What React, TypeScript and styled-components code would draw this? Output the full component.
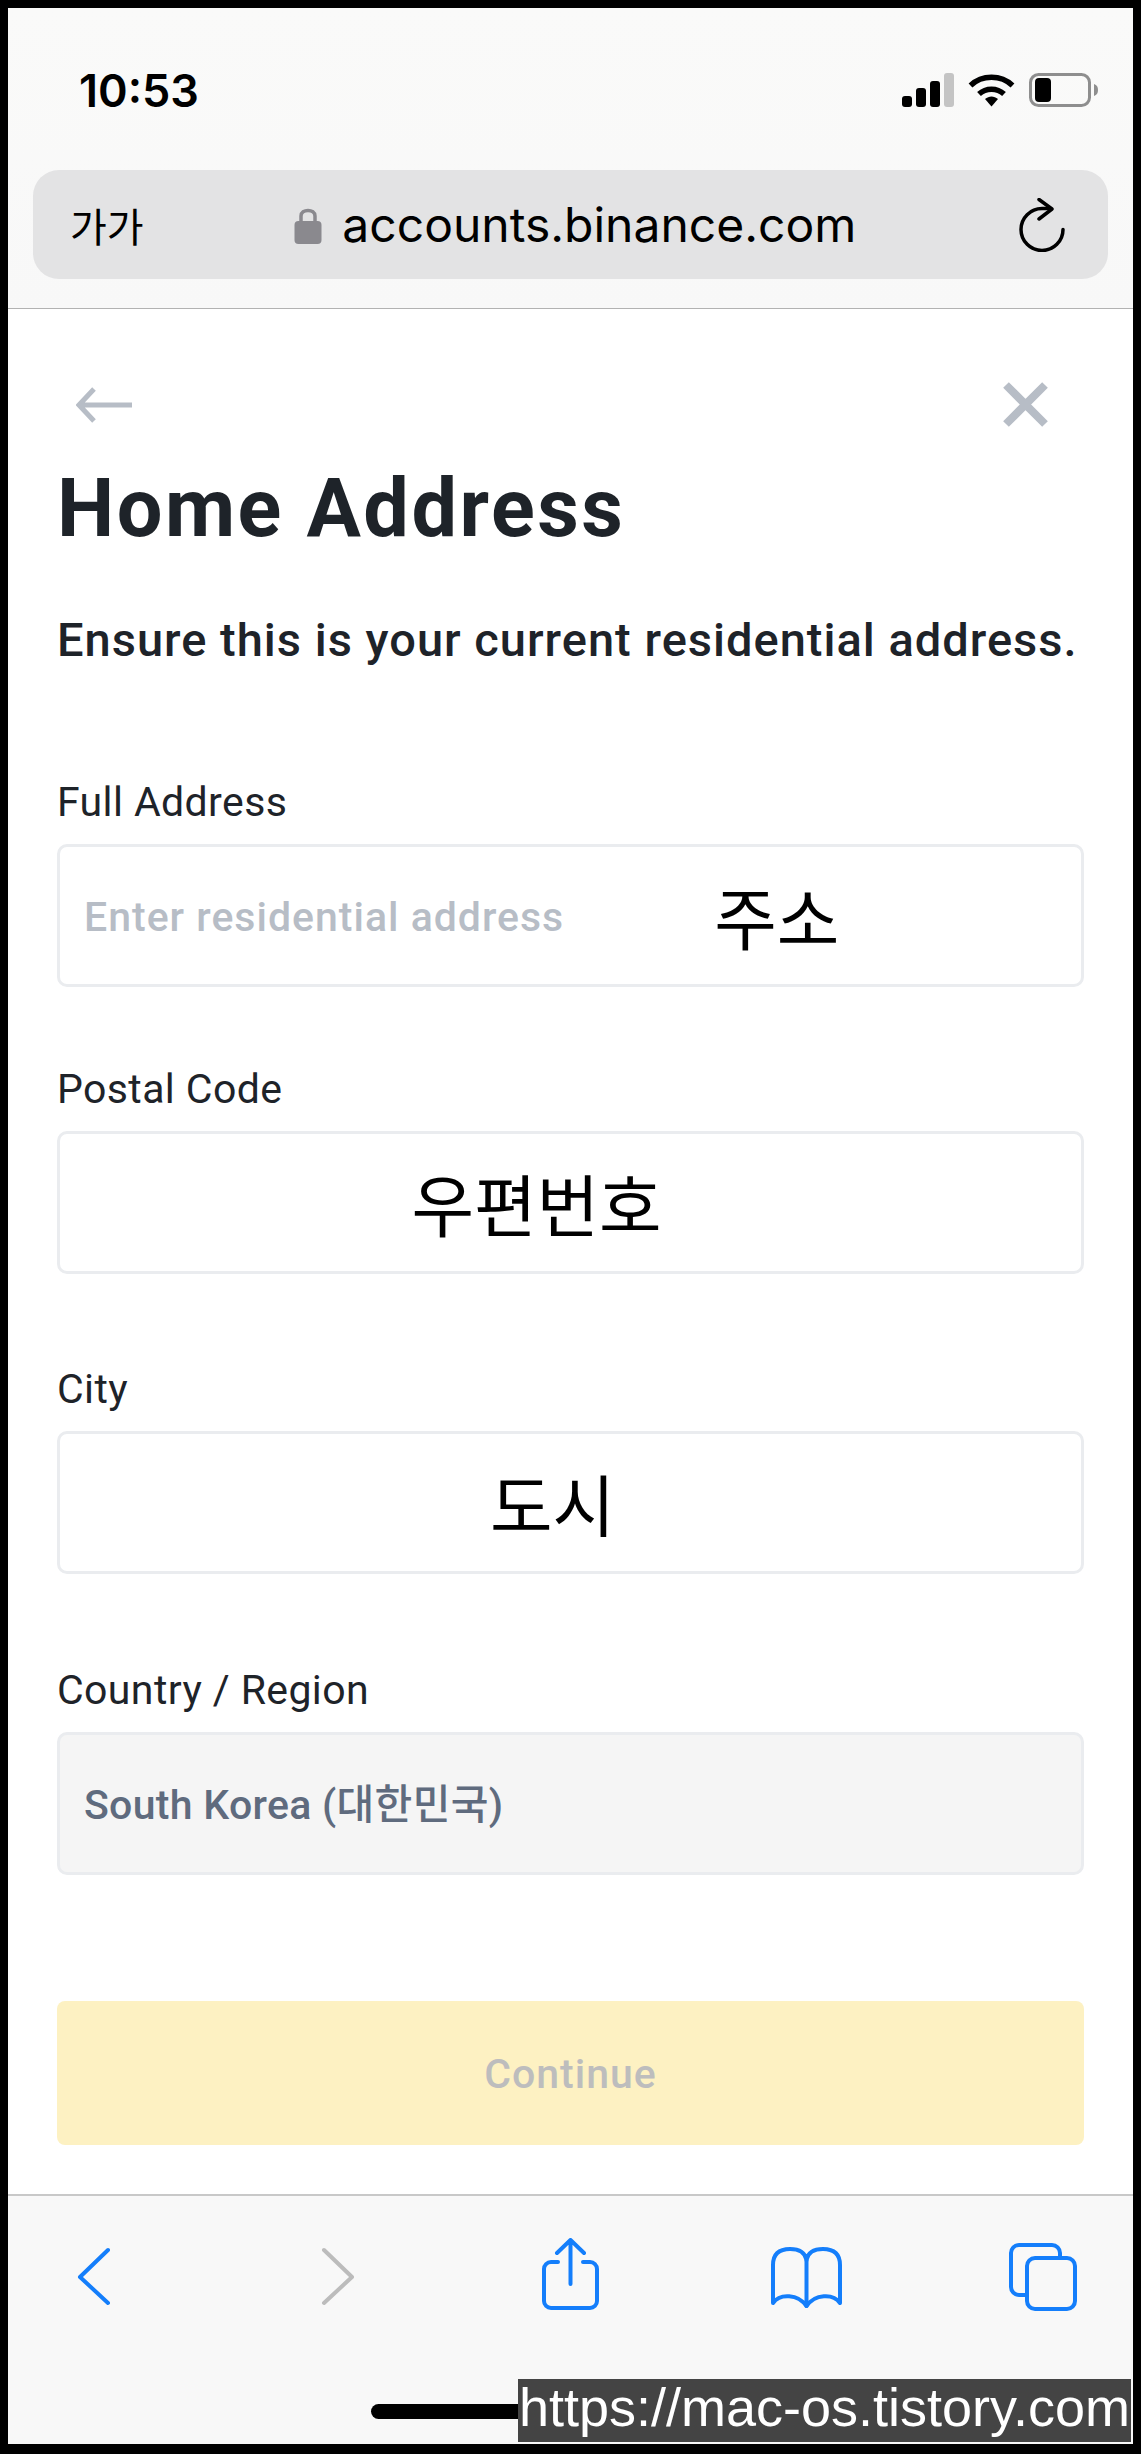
import React from 'react';
import styled, { createGlobalStyle } from 'styled-components';

const GlobalStyle = createGlobalStyle`
  html, body {
    margin: 0;
    padding: 0;
    background: #000;
  }
  * {
    box-sizing: border-box;
  }
`;

const Frame = styled.div`
  position: relative;
  width: 1141px;
  height: 2454px;
  padding: 8px 8px 10px;
  background: #000;
  font-family: Roboto, 'Noto Sans CJK KR', sans-serif;
`;

const Screen = styled.div`
  height: 100%;
  display: flex;
  flex-direction: column;
  background: #fff;
`;

const Header = styled.header`
  height: 301px;
  padding: 60px 25px 0;
  background: linear-gradient(180deg, #fafaf9 0%, #f8f8f8 100%);
  border-bottom: 1px solid #b2b2b2;
`;

const StatusBar = styled.div`
  height: 40px;
  padding: 0 8px 0 46px;
  display: flex;
  align-items: center;
  justify-content: space-between;
`;

const Time = styled.div`
  padding-top: 6px;
  font-family: Inter, sans-serif;
  font-weight: 600;
  font-size: 45px;
  line-height: 40px;
  color: #000;
`;

const StatusIcons = styled.div`
  display: flex;
  align-items: center;
  gap: 14px;
  margin-right: 2px;
  padding-top: 4px;
`;

const UrlBar = styled.div`
  height: 109px;
  margin-top: 62px;
  padding: 0 43px 0 37px;
  display: flex;
  align-items: center;
  justify-content: space-between;
  background: #e3e3e4;
  border-radius: 26px;
`;

const TextSize = styled.div`
  font-family: 'Noto Sans CJK KR', sans-serif;
  font-size: 40px;
  line-height: 48px;
  color: #000;
`;

const Site = styled.div`
  display: flex;
  align-items: center;
  gap: 20px;
  margin-right: 12px;
  font-family: Inter, sans-serif;
  font-size: 48px;
  line-height: 60px;
  color: #000;
`;

const Form = styled.main`
  flex: 1;
  padding: 73px 49px 0;
`;

const Nav = styled.div`
  height: 45px;
  padding: 0 36px 0 19px;
  display: flex;
  align-items: center;
  justify-content: space-between;
`;

const Title = styled.h1`
  margin: 42px 0 0;
  font-size: 81px;
  line-height: 80px;
  font-weight: 700;
  letter-spacing: 2.5px;
  color: #1e2329;
`;

const Subtitle = styled.p`
  margin: 63px 0 0;
  font-size: 47px;
  line-height: 56px;
  font-weight: 500;
  letter-spacing: 1px;
  white-space: nowrap;
  color: #1e2329;
`;

const Field = styled.div<{ $top: number }>`
  margin-top: ${(p) => p.$top}px;
`;

const Label = styled.div`
  height: 48px;
  font-size: 41px;
  line-height: 48px;
  letter-spacing: 0.4px;
  color: #1e2329;
`;

const InputBox = styled.div<{ $disabled?: boolean; $center?: boolean; $shift?: number }>`
  height: 143px;
  margin-top: 18px;
  padding: ${(p) => (p.$center ? '0' : '0 24px')};
  padding-right: ${(p) => (p.$shift ? `${p.$shift}px` : undefined)};
  display: flex;
  align-items: center;
  justify-content: ${(p) => (p.$center ? 'center' : 'flex-start')};
  border: 3px solid #eaecef;
  border-radius: 10px;
  background: ${(p) => (p.$disabled ? '#f5f5f5' : '#fff')};
`;

const Placeholder = styled.span`
  padding-top: 2px;
  font-size: 41px;
  font-weight: 500;
  letter-spacing: 1px;
  color: #b7bdc6;
`;

const Value = styled.span`
  padding-bottom: 6px;
  font-size: 41px;
  font-weight: 500;
  letter-spacing: 0.3px;
  color: #5f6b7e;
`;

const Annotation = styled.span<{ $left?: number }>`
  margin-left: ${(p) => p.$left ?? 0}px;
  font-family: 'Noto Sans CJK KR', sans-serif;
  font-size: 68px;
  line-height: 80px;
  color: #000;
`;

const ContinueButton = styled.div`
  height: 144px;
  margin-top: 126px;
  padding-top: 2px;
  display: flex;
  align-items: center;
  justify-content: center;
  background: #fdf1c2;
  border-radius: 8px;
  font-size: 41px;
  font-weight: 500;
  letter-spacing: 1px;
  color: #bdbdbd;
`;

const Toolbar = styled.footer`
  height: 250px;
  padding-top: 42px;
  display: flex;
  flex-direction: column;
  align-items: center;
  background: #f8f8f8;
  border-top: 2px solid #c8c8c8;
`;

const ToolRow = styled.div`
  width: 100%;
  padding: 0 50px 0 46px;
  display: flex;
  justify-content: space-between;
`;

const HomeIndicator = styled.div`
  width: 400px;
  height: 15px;
  margin-top: 86px;
  border-radius: 8px;
  background: #000;
`;

const Watermark = styled.div`
  position: absolute;
  right: 10px;
  bottom: 12px;
  width: 613px;
  height: 63px;
  padding-bottom: 6px;
  display: flex;
  align-items: center;
  justify-content: center;
  background: #444;
  font-family: 'Liberation Sans', sans-serif;
  font-size: 54px;
  line-height: 57px;
  color: #fff;
  white-space: nowrap;
`;

const Signal = () => (
  <svg width="52" height="34" viewBox="0 0 52 34">
    <rect x="0" y="23" width="10" height="11" rx="3" fill="#000" />
    <rect x="14" y="15" width="10" height="19" rx="3" fill="#000" />
    <rect x="28" y="8" width="10" height="26" rx="3" fill="#000" />
    <rect x="42" y="0" width="10" height="34" rx="3" fill="#c4c4c4" />
  </svg>
);

const Wifi = () => (
  <svg width="47" height="34" viewBox="0 0 47 34">
    <path d="M2.5 12.5C14 1.5 33 1.5 44.5 12.5" fill="none" stroke="#000" strokeWidth="5.5" />
    <path d="M11 21C18 14.5 29 14.5 36 21" fill="none" stroke="#000" strokeWidth="5.5" />
    <path d="M17 26C21 22.5 26 22.5 30 26L23.5 33.5Z" fill="#000" />
  </svg>
);

const Battery = () => (
  <svg width="69" height="34" viewBox="0 0 69 34">
    <rect x="1.5" y="1.5" width="59" height="31" rx="8" fill="none" stroke="#8e8e8e" strokeWidth="3" />
    <rect x="6" y="5" width="16" height="24" rx="4" fill="#000" />
    <path d="M65 11C68 12 69 14 69 17C69 20 68 22 65 23Z" fill="#8e8e8e" />
  </svg>
);

const Lock = () => (
  <svg width="28" height="38" viewBox="0 0 28 38">
    <path d="M7 17V10C7 2.5 21 2.5 21 10V17" fill="none" stroke="#8a898e" strokeWidth="3.5" />
    <rect x="0.5" y="15" width="27" height="23" rx="4" fill="#8a898e" />
  </svg>
);

const Reload = () => (
  <svg width="46" height="54" viewBox="0 0 46 54">
    <path d="M44 31.5A21 21 0 1 1 23 10.5H29" fill="none" stroke="#000" strokeWidth="3.5" strokeLinecap="round" />
    <path d="M20 1.5L33 11L20 21" fill="none" stroke="#000" strokeWidth="3.5" strokeLinecap="round" strokeLinejoin="round" />
  </svg>
);

const BackArrow = () => (
  <svg width="56" height="36" viewBox="0 0 56 36">
    <path d="M18 2L3 18L18 34M3 18H56" fill="none" stroke="#b7bdc6" strokeWidth="5" />
  </svg>
);

const CloseIcon = () => (
  <svg width="45" height="45" viewBox="0 0 45 45">
    <path d="M3 3L42 42M42 3L3 42" fill="none" stroke="#b7bdc6" strokeWidth="8" />
  </svg>
);

const ToolIcon = ({ children }: { children: React.ReactNode }) => (
  <svg width="80" height="80" viewBox="0 0 80 80" fill="none" strokeWidth="4" strokeLinecap="round" strokeLinejoin="round" stroke="#147efb">
    {children}
  </svg>
);

function App() {
  return (
    <>
      <GlobalStyle />
      <Frame>
        <Screen>
          <Header>
            <StatusBar>
              <Time>10:53</Time>
              <StatusIcons>
                <Signal />
                <Wifi />
                <Battery />
              </StatusIcons>
            </StatusBar>
            <UrlBar>
              <TextSize>가가</TextSize>
              <Site>
                <Lock />
                accounts.binance.com
              </Site>
              <Reload />
            </UrlBar>
          </Header>

          <Form>
            <Nav>
              <BackArrow />
              <CloseIcon />
            </Nav>
            <Title>Home Address</Title>
            <Subtitle>Ensure this is your current residential address.</Subtitle>

            <Field $top={110}>
              <Label>Full Address</Label>
              <InputBox>
                <Placeholder>Enter residential address</Placeholder>
                <Annotation $left={150}>주소</Annotation>
              </InputBox>
            </Field>
            <Field $top={78}>
              <Label>Postal Code</Label>
              <InputBox $center $shift={68}>
                <Annotation>우편번호</Annotation>
              </InputBox>
            </Field>
            <Field $top={91}>
              <Label>City</Label>
              <InputBox $center $shift={36}>
                <Annotation>도시</Annotation>
              </InputBox>
            </Field>
            <Field $top={92}>
              <Label>Country / Region</Label>
              <InputBox $disabled>
                <Value>South Korea (대한민국)</Value>
              </InputBox>
            </Field>

            <ContinueButton>Continue</ContinueButton>
          </Form>

          <Toolbar>
            <ToolRow>
              <ToolIcon>
                <path d="M54 12L26 39L54 65" />
              </ToolIcon>
              <ToolIcon>
                <path d="M33 12L61 39L33 65" stroke="#bcbcbc" />
              </ToolIcon>
              <ToolIcon>
                <path d="M29 24H22a7 7 0 0 0-7 7V63a7 7 0 0 0 7 7H61a7 7 0 0 0 7-7V31a7 7 0 0 0-7-7H54" />
                <path d="M41.5 46V3M28 15L41.5 2L55 15" />
              </ToolIcon>
              <ToolIcon>
                <path d="M40.5 22V68" />
                <path d="M40.5 22C39 14 32 11 24 11C14 11 7 15 7 27V65C14 55 32 56 40.5 68C49 56 67 55 74 65V27C74 15 67 11 57 11C49 11 42 14 40.5 22" />
              </ToolIcon>
              <ToolIcon>
                <path d="M22 57H16a8 8 0 0 1-8-8V15a8 8 0 0 1 8-8H49a8 8 0 0 1 8 8V20" />
                <rect x="24" y="20" width="48" height="51" rx="8" />
              </ToolIcon>
            </ToolRow>
            <HomeIndicator />
          </Toolbar>
        </Screen>
        <Watermark>https://mac-os.tistory.com</Watermark>
      </Frame>
    </>
  );
}

export default App;
